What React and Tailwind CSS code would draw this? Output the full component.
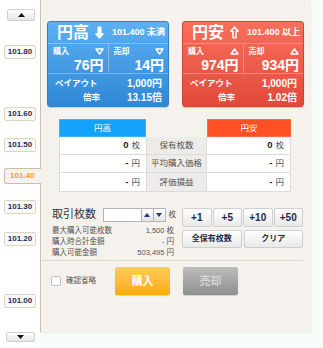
import React from "react";

const ticks = [
  { label: "101.80", top: "top-[45px]" },
  { label: "101.60", top: "top-[107px]" },
  { label: "101.50", top: "top-[138px]" },
  { label: "101.30", top: "top-[200px]" },
  { label: "101.20", top: "top-[232px]" },
  { label: "101.00", top: "top-[294px]" },
];

const Arrow = ({ up }) => (
  <svg width="9" height="13" viewBox="0 0 9 13" className="ml-[6px]">
    {up ? (
      <path d="M4.5 1 L8.2 5.2 H6 V11.8 H3 V5.2 H0.8 Z" fill="none" stroke="white" strokeWidth="1.5" strokeLinejoin="round" />
    ) : (
      <path d="M4.5 12 L8.2 7.8 H6 V1.2 H3 V7.8 H0.8 Z" fill="white" stroke="white" strokeWidth="1.2" strokeLinejoin="round" />
    )}
  </svg>
);

const Tri = ({ up }) => (
  <svg width="9" height="7" viewBox="0 0 9 7">
    {up ? (
      <path d="M4.5 1 L8 6 H1 Z" fill="none" stroke="white" strokeWidth="1.4" strokeLinejoin="round" />
    ) : (
      <path d="M1 1 H8 L4.5 6 Z" fill="none" stroke="white" strokeWidth="1.4" strokeLinejoin="round" />
    )}
  </svg>
);

const PriceCell = ({ label, value, up, divider }) => (
  <div className={divider ? "flex-1 flex flex-col pl-[5px] pr-[4px] pt-[3px] border-l border-white/30" : "flex-1 flex flex-col pl-[5px] pr-[4px] pt-[3px]"}>
    <div className="flex items-center justify-between h-[9px]">
      <span className="text-[8px]">{label}</span>
      <Tri up={up} />
    </div>
    <div className="text-right text-[14px] leading-[16px] mt-[1px]">{value}</div>
  </div>
);

const Card = ({ blue, title, limit, buy, sell, rate }) => (
  <div
    className={
      blue
        ? "w-[122px] h-[86px] rounded-[3px] border border-[#2f80c8] bg-linear-to-b from-[#5cb0f2] to-[#2e87d6] text-white font-bold flex flex-col shadow-[0_1px_1px_rgba(0,0,0,0.15)]"
        : "w-[122px] h-[86px] rounded-[3px] border border-[#d04332] bg-linear-to-b from-[#f6705c] to-[#e2493a] text-white font-bold flex flex-col shadow-[0_1px_1px_rgba(0,0,0,0.15)]"
    }
  >
    <div className="h-[22px] flex items-center pl-[9px] pr-[3px] border-b border-white/30">
      <span className="text-[16px] leading-none">{title}</span>
      <Arrow up={!blue} />
      <span className="ml-auto text-[9px]">{limit}</span>
    </div>
    <div className="h-[30px] flex border-b border-white/30">
      <PriceCell label="購入" value={buy} up={!blue} />
      <PriceCell label="売却" value={sell} up={!blue} divider />
    </div>
    <div className="flex-1 flex flex-col justify-center gap-[4px] pl-[7px] pr-[6px]">
      <div className="flex justify-between items-center h-[10px]">
        <span className="text-[8.5px]">ペイアウト</span>
        <span className="text-[10px]">1,000円</span>
      </div>
      <div className="flex justify-between items-center h-[10px]">
        <span className="text-[8.5px] pl-[28px]">倍率</span>
        <span className="text-[10px]">{rate}</span>
      </div>
    </div>
  </div>
);

const rows = [
  { left: "0", lu: "枚", label: "保有枚数" },
  { left: "-", lu: "円", label: "平均購入価格" },
  { left: "-", lu: "円", label: "評価損益" },
];

const btn =
  "flex items-center justify-center rounded-[2px] border border-[#cfcfcf] bg-linear-to-b from-white to-[#e9e9e9] text-[#1e2a44] font-bold";

const App = () => {
  return (
    <div className="w-[323px] h-[348px] flex bg-[#f8fcf8] font-['Liberation_Sans','Noto_Sans_CJK_JP',sans-serif] text-[#333] overflow-hidden">
      <div className="w-[40px] h-full bg-white relative z-10">
        <div className="absolute left-[7px] top-[9px] w-[28px] h-[12px] rounded-[2px] border border-[#d0d0d0] bg-linear-to-b from-white to-[#e6e6e6] flex items-center justify-center">
          <svg width="7" height="4" viewBox="0 0 7 4">
            <path d="M3.5 0 L7 4 H0 Z" fill="#111" />
          </svg>
        </div>
        {ticks.map((t) => (
          <div
            key={t.label}
            className={`absolute left-[4px] ${t.top} w-[32px] h-[14px] rounded-[2px] border border-[#ddd4c6] bg-[#fbf9f6] flex items-center justify-center text-[8px] font-bold text-[#1d2d5c]`}
          >
            {t.label}
          </div>
        ))}
        <div className="absolute left-[4px] top-[168px] w-[37px] h-[16px] rounded-l-[3px] border border-r-0 border-[#cdbfa6] bg-[#f5f1ed] flex items-center pl-[5px] text-[8px] font-bold text-[#f2a12a]">
          101.40
        </div>
        <div className="absolute left-[6px] top-[332px] w-[29px] h-[10px] rounded-[2px] border border-[#d0d0d0] bg-linear-to-b from-white to-[#e6e6e6] flex items-center justify-center">
          <svg width="7" height="4" viewBox="0 0 7 4">
            <path d="M0 0 H7 L3.5 4 Z" fill="#111" />
          </svg>
        </div>
      </div>

      <div className="w-[271px] h-[332px] bg-[#f5f1ed] border-l border-[#cdbfa6] shadow-[0_1px_2px_rgba(0,0,0,0.06)] flex flex-col">
        <div className="flex gap-[13px] pl-[6px] pt-[21px]">
          <Card blue title="円高" limit="101.400 未満" buy="76円" sell="14円" rate="13.15倍" />
          <Card title="円安" limit="101.400 以上" buy="974円" sell="934円" rate="1.02倍" />
        </div>

        <div className="ml-[18px] mt-[12px] w-[232px] text-[8.5px]">
          <div className="grid grid-cols-[87px_61px_84px] h-[18px]">
            <div className="bg-[#14a3fb] border border-[#3cb3fc] text-white flex items-center justify-center">円高</div>
            <div />
            <div className="bg-[#fd5025] border border-[#fe6a45] text-white flex items-center justify-center">円安</div>
          </div>
          <div className="border border-t-0 border-[#dcdcdc]">
            {rows.map((r, i) => (
              <div
                key={r.label}
                className={i < 2 ? "grid grid-cols-[86px_61px_83px] h-[18px] border-b border-[#dcdcdc]" : "grid grid-cols-[86px_61px_83px] h-[18px]"}
              >
                <div className="bg-white flex items-center justify-end pr-[6px] gap-[3px]">
                  <span className="font-bold text-[9.5px] text-[#222]">{r.left}</span>
                  <span className="text-[#555]">{r.lu}</span>
                </div>
                <div className="bg-[#eeecea] border-x border-[#dcdcdc] flex items-center justify-center text-[#555] whitespace-nowrap">
                  {r.label}
                </div>
                <div className="bg-white flex items-center justify-end pr-[6px] gap-[3px]">
                  <span className="font-bold text-[9.5px] text-[#222]">{r.left}</span>
                  <span className="text-[#555]">{r.lu}</span>
                </div>
              </div>
            ))}
          </div>
        </div>

        <div className="flex mt-[15px] pl-[11px]">
          <div className="w-[124px]">
            <div className="flex items-center h-[15px]">
              <span className="text-[11px] text-[#333] w-[51px]">取引枚数</span>
              <div className="w-[39px] h-[14px] bg-white border border-[#b5b5b5]" />
              <div className="w-[12px] h-[14px] border border-l-0 border-[#b5b5b5] bg-linear-to-b from-white to-[#e4e4e4] flex items-center justify-center">
                <svg width="6" height="4" viewBox="0 0 6 4">
                  <path d="M3 0 L6 4 H0 Z" fill="#1e3a78" />
                </svg>
              </div>
              <div className="w-[12px] h-[14px] border border-l-0 border-[#b5b5b5] bg-linear-to-b from-white to-[#e4e4e4] flex items-center justify-center">
                <svg width="6" height="4" viewBox="0 0 6 4">
                  <path d="M0 0 H6 L3 4 Z" fill="#1e3a78" />
                </svg>
              </div>
              <span className="ml-[3px] text-[7.5px] text-[#555]">枚</span>
            </div>
            <div className="mt-[3px] text-[7.5px] leading-[11px] text-[#555] pr-[2px]">
              <div className="flex justify-between">
                <span>最大購入可能枚数</span>
                <span>1,500 枚</span>
              </div>
              <div className="flex justify-between">
                <span>購入時合計金額</span>
                <span>- 円</span>
              </div>
              <div className="flex justify-between">
                <span>購入可能金額</span>
                <span>503,495 円</span>
              </div>
            </div>
          </div>
          <div className="ml-[6px] w-[121px] flex flex-col gap-[3px] pt-[1px]">
            <div className="grid grid-cols-4 gap-[1px] h-[19px] text-[10px]">
              <div className={btn}>+1</div>
              <div className={btn}>+5</div>
              <div className={btn}>+10</div>
              <div className={btn}>+50</div>
            </div>
            <div className="grid grid-cols-2 gap-[2px] h-[18px] text-[8px]">
              <div className={btn}>全保有枚数</div>
              <div className={btn}>クリア</div>
            </div>
          </div>
        </div>

        <div className="mt-[2px] ml-[1px] mr-[8px] border-t border-[#ddd6cc]" />

        <div className="flex items-center mt-[6px] pl-[10px]">
          <div className="w-[10px] h-[10px] rounded-[2px] border border-[#c4c4c4] bg-white" />
          <span className="ml-[5px] text-[7.5px] text-[#555]">確認省略</span>
          <div className="ml-[19px] w-[55px] h-[28px] rounded-[2px] bg-linear-to-b from-[#ffcc55] to-[#ffaa05] flex items-center justify-center text-white font-bold text-[11px] shadow-[0_1px_1px_rgba(0,0,0,0.1)]">
            購入
          </div>
          <div className="ml-[13px] w-[55px] h-[28px] rounded-[2px] bg-linear-to-b from-[#bdbdbd] to-[#8f8f8f] flex items-center justify-center text-[#d4d4d4] font-bold text-[11px] shadow-[0_1px_1px_rgba(0,0,0,0.15)]">
            売却
          </div>
        </div>
      </div>
    </div>
  );
};

export default App;
